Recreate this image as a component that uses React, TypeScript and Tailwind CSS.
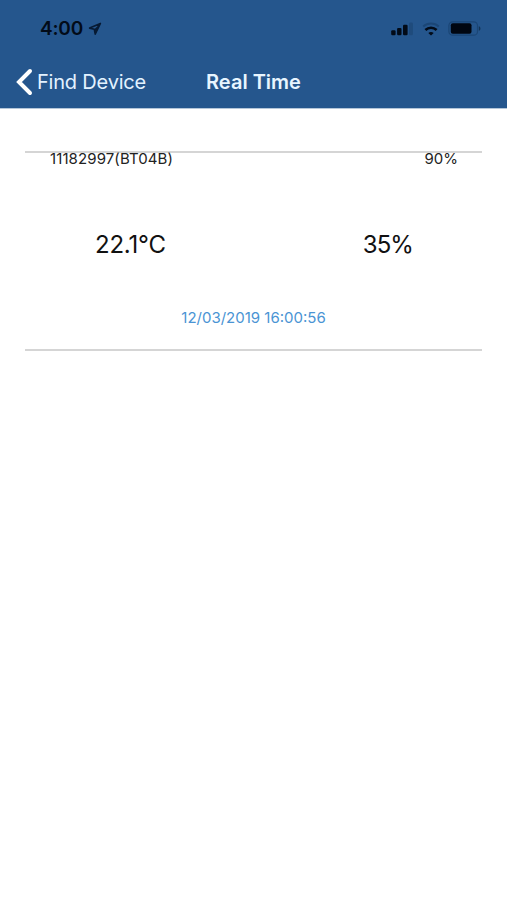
import React from 'react';

interface Reading {
  device: string;
  battery: string;
  temperature: string;
  humidity: string;
  time: string;
}

const reading: Reading = {
  device: '11182997(BT04B)',
  battery: '90%',
  temperature: '22.1°C',
  humidity: '35%',
  time: '12/03/2019 16:00:56',
};

function StatusBar() {
  return (
    <div className="flex h-14 items-center justify-between pl-10 pr-[26px] pt-px text-black">
      <div className="flex items-center gap-[5px]">
        <span className="text-[19px] font-semibold leading-6 tracking-[-0.2px] text-[#020b18]">4:00</span>
        <svg width="14" height="14" viewBox="0 0 14 14" fill="none">
          <path d="M12.4 1.4 1.6 6.1l4.7 1.2.9 4.8z" stroke="#071a33" strokeWidth="1.6" strokeLinejoin="round" />
          <path d="M12.4 1.4 6.3 7.3l.9 4.8z" fill="#071a33" />
        </svg>
      </div>
      <div className="flex items-center">
        <svg width="23" height="14" viewBox="0 0 23 14">
          <rect x="0.2" y="8.2" width="4.4" height="5" rx="1.2" fill="#020b18" />
          <rect x="6.1" y="5.9" width="4.4" height="7.3" rx="1.2" fill="#020b18" />
          <rect x="12" y="2.8" width="4.6" height="10.4" rx="1.2" fill="#020b18" />
          <rect x="18.1" y="0.6" width="3.8" height="12.6" rx="1.2" fill="#1f4b7c" />
        </svg>
        <svg className="ml-2" width="18" height="14" viewBox="0 0 18 14" fill="none">
          <path d="M1.2 4.4c4.5-4 11.1-4 15.6 0" stroke="#1b4676" strokeWidth="2" />
          <path d="M3.4 8c3.2-3 8-3 11.2 0" stroke="#020b18" strokeWidth="2.6" />
          <path d="M6.3 11c1.6-1.4 3.8-1.4 5.4 0L9 13.6z" fill="#020b18" />
        </svg>
        <svg className="ml-2" width="33" height="15" viewBox="0 0 33 15">
          <rect x="0.9" y="0.8" width="28.6" height="13.4" rx="3.8" fill="none" stroke="#1b4676" strokeWidth="1.2" />
          <rect x="2.8" y="2.2" width="20.7" height="10.6" rx="2" fill="#000611" />
          <path d="M30.8 5.2c2.2.7 2.2 3.9 0 4.6z" fill="#123457" />
        </svg>
      </div>
    </div>
  );
}

function NavBar() {
  return (
    <nav className="grid h-[52px] grid-cols-[1fr_auto_1fr] items-center">
      <button className="flex items-center pl-[15px] text-left">
        <svg width="18" height="28" viewBox="0 0 18 28" fill="none">
          <path d="M15 3 4 14l11 11" stroke="#fff" strokeWidth="4" strokeLinecap="round" strokeLinejoin="miter" />
        </svg>
        <span className="ml-1 whitespace-nowrap text-[20px] leading-6 tracking-[-0.2px] text-[#e3f2ff]">Find Device</span>
      </button>
      <h1 className="text-[20px] font-semibold leading-6 text-[#e8f5ff]">Real Time</h1>
    </nav>
  );
}

export default function App() {
  return (
    <div className="min-h-[900px] bg-white font-['Inter',sans-serif]">
      <header className="h-[109px] border-b border-[#b4c6d9] bg-[#25568d]">
        <StatusBar />
        <NavBar />
      </header>

      <main className="px-[25px] pt-[42px]">
        <section className="h-[200px] border-y-2 border-[#d5d5d5]">
          <div className="flex justify-between pl-[25px] pr-6 text-[15px] leading-3 text-[#222]">
            <span className="tracking-[0.1px]">{reading.device}</span>
            <span>{reading.battery}</span>
          </div>
          <div className="mt-16 flex h-8 items-center justify-between px-[70px] text-[24px] leading-8 text-[#111]">
            <span className="tracking-[-0.2px]">{reading.temperature}</span>
            <span className="-mr-px tracking-[-0.9px]">{reading.humidity}</span>
          </div>
          <div className="mt-[47px] text-center text-[15px] leading-5 text-[#4a94d4]">{reading.time}</div>
        </section>
      </main>
    </div>
  );
}
